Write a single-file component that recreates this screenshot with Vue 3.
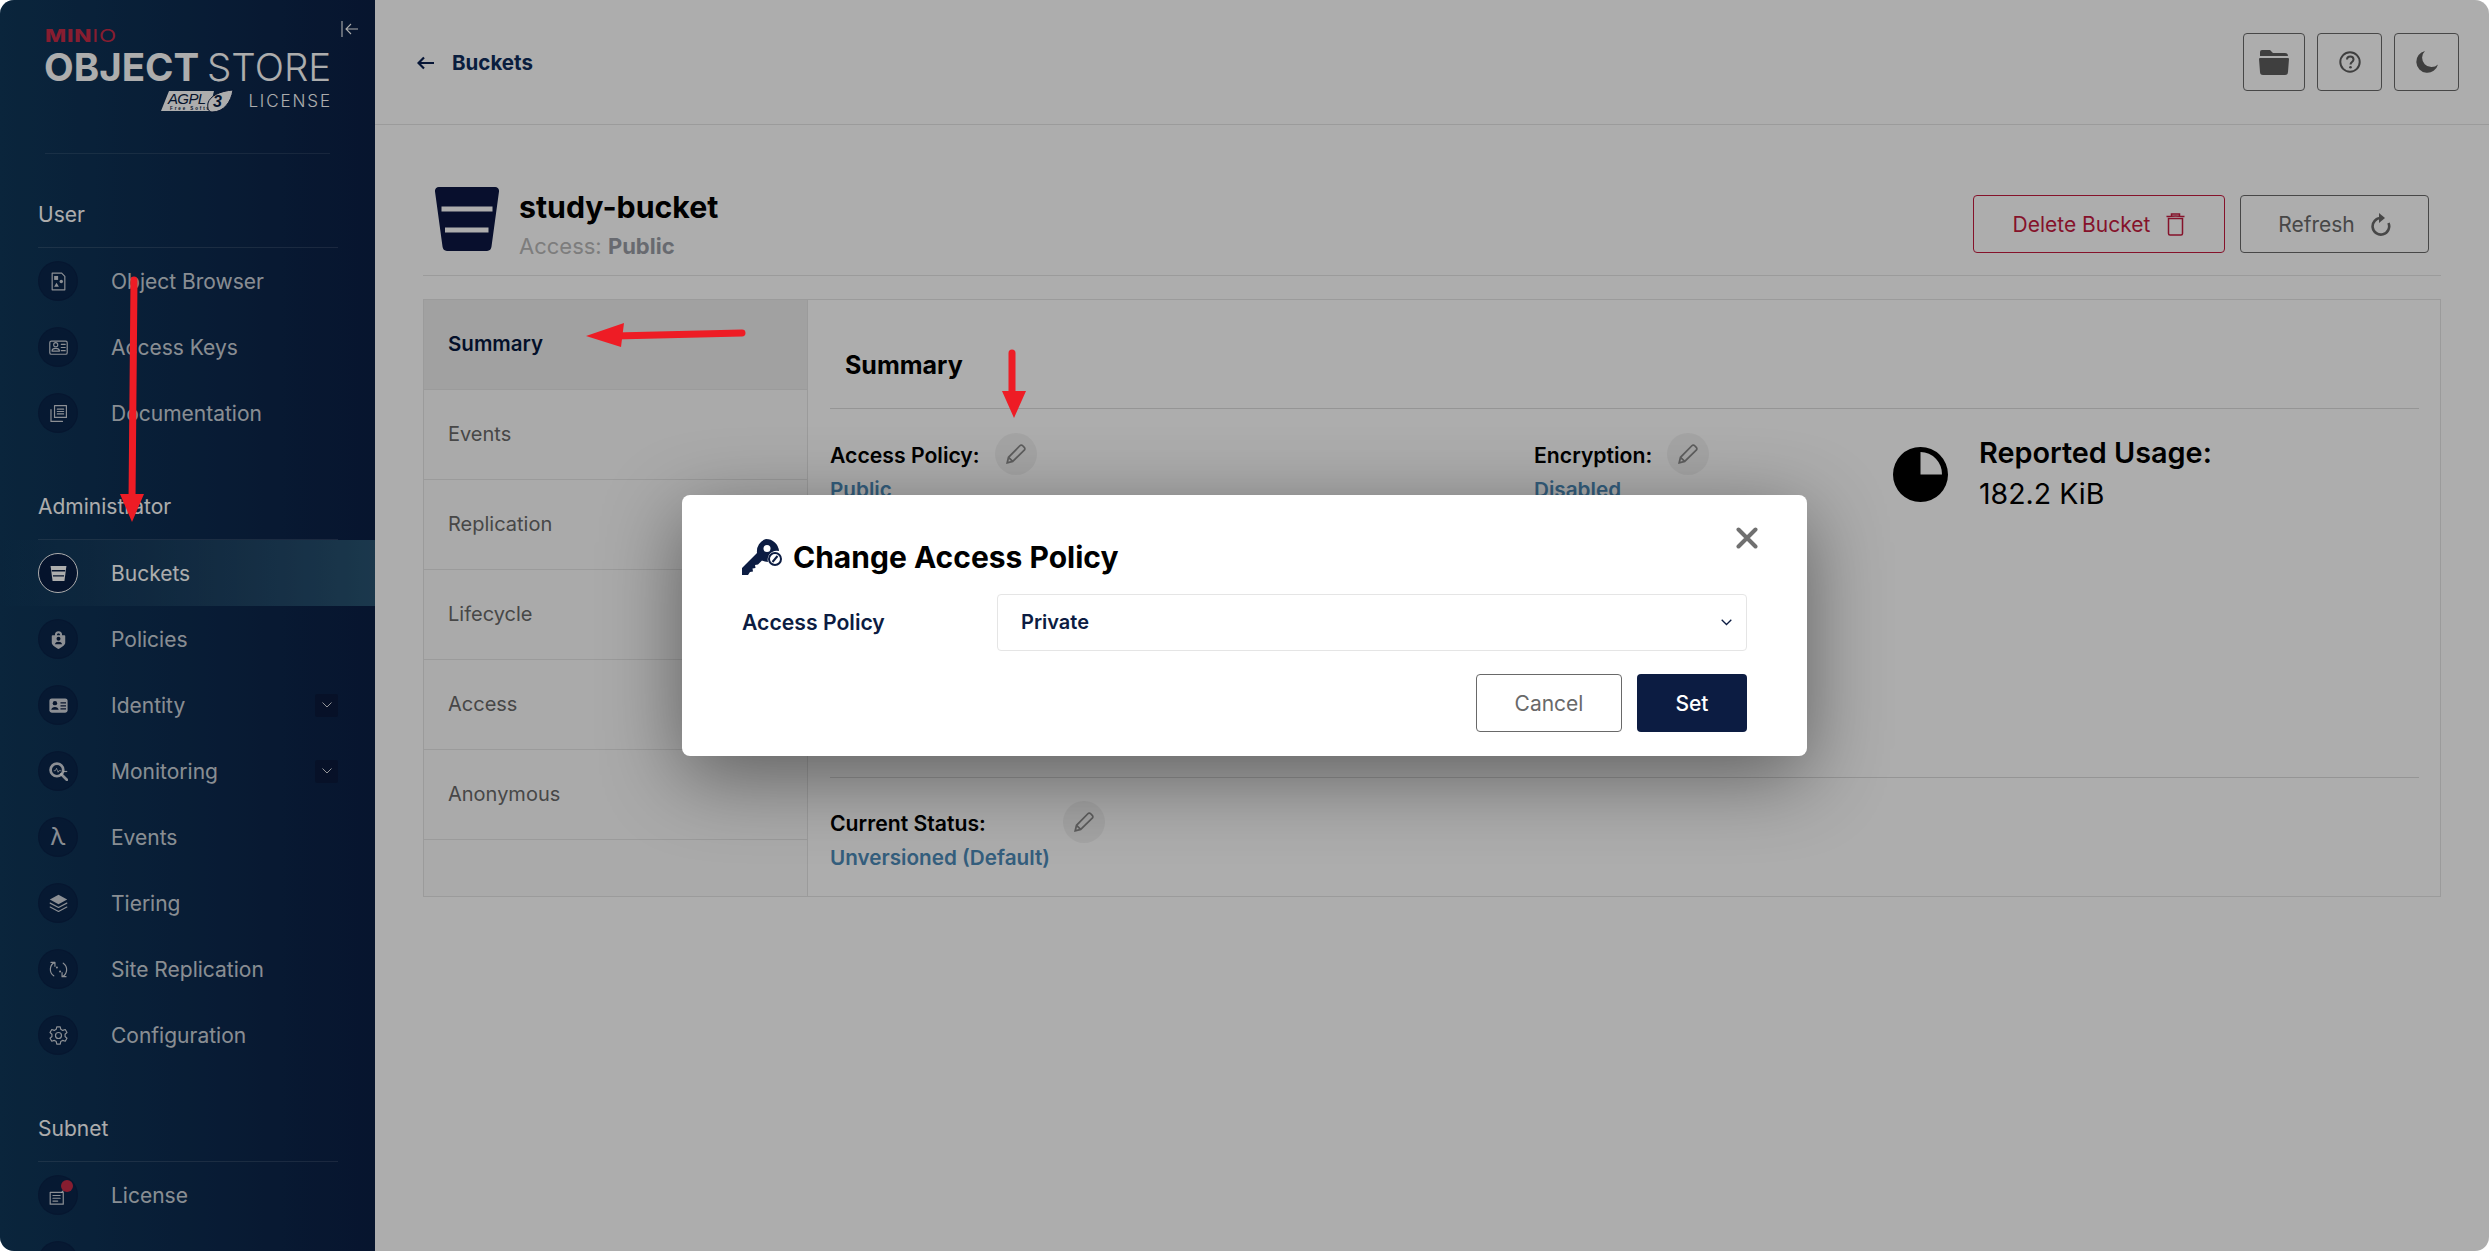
<script setup>
// sidebar menu, grouped as in the console
const stroke = 'fill="none" stroke="currentColor" stroke-width="1.500" stroke-linecap="round" stroke-linejoin="round"'
const icons = {
  browser: `<path ${stroke} d="M4 1.500h12l4 4v17H4z"/><rect x="6.500" y="5" width="5" height="5" fill="currentColor"/><circle cx="15.500" cy="12" r="2.200" fill="currentColor"/><path d="M9.500 13.500l3 5H6.500z" fill="currentColor"/>`,
  keys: `<rect x="1" y="4" width="22" height="16.500" rx="2" ${stroke}/><circle cx="8.500" cy="8.500" r="2.600" fill="none" stroke="currentColor" stroke-width="1.400"/><path ${stroke} d="M3.800 16.500c.3-4.500 9.100-4.500 9.400 0zM15.500 8h5M15.500 12h5M15.500 16h5"/>`,
  docs: `<path ${stroke} d="M7 2h15v15H7zM2.500 7v15H17"/><path ${stroke} d="M10.500 6.500h8M10.500 9.500h8M10.500 12.500h8"/>`,
  bucket: `<path d="M2 2.500h20l-2.500 19h-15z" fill="currentColor"/><path d="M3.500 8.500h17M5 15h14" stroke="#081c42" stroke-width="1.800"/>`,
  policies: `<path d="M7.500 6.500V6a4.500 4.500 0 0 1 9 0v.5h3a1 1 0 0 1 1 1V16c0 3-5 6-8.500 8-3.500-2-8.500-5-8.500-8V7.500a1 1 0 0 1 1-1zM10 6.500h4V6a2 2 0 0 0-4 0z" fill="currentColor"/><circle cx="12" cy="11" r="2.500" fill="#0b1f42"/><path d="M7.500 18c.5-4.200 8.500-4.200 9 0z" fill="#0b1f42"/>`,
  identity: `<rect x="0.500" y="3" width="23" height="18" rx="3" fill="currentColor"/><circle cx="7.500" cy="9" r="2.800" fill="#0b1f42"/><path d="M2.800 17.500c.3-5 9.100-5 9.400 0zM14.500 8h7v1.600h-7zM14.500 11.700h7v1.600h-7zM14.500 15.400h7V17h-7z" fill="#0b1f42"/>`,
  monitoring: `<circle cx="10" cy="10" r="8" fill="none" stroke="currentColor" stroke-width="3.400"/><path d="M15.500 15.500l7 7" stroke="currentColor" stroke-width="3.400" stroke-linecap="round"/><path d="M6 11h2l1.500-3 2 5 1-2h3" fill="none" stroke="currentColor" stroke-width="1"/><path d="M18 12h5" stroke="currentColor" stroke-width="1.500"/>`,
  tiering: `<path d="M12 1l11 6-11 6L1 7z" fill="currentColor"/><path ${stroke} stroke-width="1.800" d="M1.500 11.500L12 17l10.500-5.500M1.500 16.500L12 22l10.500-5.500"/>`,
  replication: `<path ${stroke} stroke-width="2" d="M6 20a10 10 0 0 1 1-17M18 4a10 10 0 0 1-1 17M7.500 8V3H2.500M16.500 16v5h5"/><circle cx="10" cy="9.500" r="1.300" fill="currentColor"/><circle cx="14" cy="14.500" r="1.300" fill="currentColor"/>`,
  config: `<path ${stroke} d="M9.800 1h4.400l.7 3.200 2.500 1.400 3.100-1.100 2.200 3.800-2.400 2.100v2.900l2.400 2.100-2.200 3.800-3.100-1.100-2.500 1.400-.7 3.500H9.800l-.7-3.500-2.500-1.400-3.100 1.100-2.200-3.800 2.400-2.100v-2.900L1.300 8.300l2.200-3.800 3.100 1.100 2.500-1.400z"/><circle cx="12" cy="12" r="3.800" ${stroke}/>`,
  license: `<path ${stroke} d="M1.500 8h16.500v15H1.500z"/><path ${stroke} d="M5 12h9M5 15.500h9M5 19h6M16 8l4-4"/>`
}

const groups = [
  {
    title: 'User',
    items: [
      { label: 'Object Browser', icon: 'browser' },
      { label: 'Access Keys', icon: 'keys' },
      { label: 'Documentation', icon: 'docs' }
    ]
  },
  {
    title: 'Administrator',
    items: [
      { label: 'Buckets', icon: 'bucket', active: true },
      { label: 'Policies', icon: 'policies' },
      { label: 'Identity', icon: 'identity', more: true },
      { label: 'Monitoring', icon: 'monitoring', more: true },
      { label: 'Events', glyph: 'λ' },
      { label: 'Tiering', icon: 'tiering' },
      { label: 'Site Replication', icon: 'replication' },
      { label: 'Configuration', icon: 'config' }
    ]
  },
  {
    title: 'Subnet',
    items: [
      { label: 'License', icon: 'license', dot: true },
      { label: '', icon: 'docs' }
    ]
  }
]

const tabs = ['Summary', 'Events', 'Replication', 'Lifecycle', 'Access', 'Anonymous']
</script>

<template>
  <div class="window">
    <aside class="sidebar">
      <div class="logo">
        <div class="logo-minio"><b>MIN</b><span>IO</span></div>
        <div class="logo-product"><b>OBJECT</b> <span>STORE</span></div>
        <div class="logo-license">
          <svg width="73" height="24" viewBox="0 0 73 24">
            <path d="M8 2h45l-5 20H0z" fill="#fff" />
            <text x="7" y="15" font-family="Liberation Sans" font-style="italic" font-size="15" fill="#081c42" textLength="40">AGPL</text>
            <text x="9" y="21" font-family="Liberation Sans" font-weight="700" font-size="4.500" fill="#081c42">Free Software</text>
            <path d="M47 14c2-7 12-12 25-13-2 12-9 22-21 22-3 0-5-3-4-9z" fill="#fff" stroke="#081c42" stroke-width="1" />
            <text x="52" y="18" font-family="Liberation Sans" font-style="italic" font-weight="700" font-size="16" fill="#081c42">3</text>
          </svg>
          <span>LICENSE</span>
        </div>
        <svg class="collapse" width="18" height="18" viewBox="0 0 18 18">
          <path d="M1 1v16M17 9H5M10 4L5 9l5 5" fill="none" stroke="#fff" stroke-width="1.100" />
        </svg>
      </div>

      <section v-for="group in groups" :key="group.title">
        <h4 class="group-title">{{ group.title }}</h4>
        <a v-for="item in group.items" :key="item.label" class="nav-item" :class="{ active: item.active }">
          <span class="nav-icon">
            <span v-if="item.glyph" class="glyph">{{ item.glyph }}</span>
            <svg v-else width="19" height="19" viewBox="0 0 24 24" v-html="icons[item.icon]"></svg>
            <i v-if="item.dot" class="dot"></i>
          </span>
          <span class="nav-label">{{ item.label }}</span>
          <span v-if="item.more" class="more">
            <svg width="10" height="6" viewBox="0 0 10 6"><path d="M.5.5L5 5 9.500.5" fill="none" stroke="#fff" stroke-opacity=".85" /></svg>
          </span>
        </a>
      </section>
    </aside>

    <main class="main">
      <header class="topbar">
        <a class="back">
          <svg width="18" height="14" viewBox="0 0 18 14"><path d="M17 7H2M7 1.500L1.500 7 7 12.500" fill="none" stroke="#0a2050" stroke-width="2.200" /></svg>
          <span>Buckets</span>
        </a>
        <div class="top-actions">
          <button class="top-btn wide">
            <svg width="30" height="25" viewBox="0 0 30 25"><path d="M3 0h8l3 3h12a3 3 0 0 1 3 3H1V2a2 2 0 0 1 2-2zM1 8h28a1 1 0 0 1 1 1l-1 13a3 3 0 0 1-3 3H4a3 3 0 0 1-3-3L0 9a1 1 0 0 1 1-1z" fill="#5e5e5e" /></svg>
          </button>
          <button class="top-btn">
            <svg width="22" height="22" viewBox="0 0 22 22">
              <circle cx="11" cy="11" r="9.700" fill="none" stroke="#5e5e5e" stroke-width="2" />
              <path d="M8 8.500c0-4 6.500-4 6.500 0 0 2.500-3 2.500-3 5" fill="none" stroke="#5e5e5e" stroke-width="2" />
              <circle cx="11.500" cy="16.300" r="1.300" fill="#5e5e5e" />
            </svg>
          </button>
          <button class="top-btn">
            <svg width="22" height="22" viewBox="0 0 22 22"><path d="M9 0a9 9 0 0 0 13 13.500A11 11 0 1 1 9 0z" fill="#5e5e5e" /></svg>
          </button>
        </div>
      </header>

      <div class="content">
        <div class="bucket-head">
          <svg class="bucket-icon" width="64" height="64" viewBox="0 0 64 64">
            <path d="M4 0h56a4 4 0 0 1 4 4.500l-7.500 55A5 5 0 0 1 52 64H12a5 5 0 0 1-4.500-4.500L0 4.500A4 4 0 0 1 4 0z" fill="#0c1743" />
            <path d="M6.500 22h51M10 43h43.500" stroke="#fff" stroke-width="5" />
          </svg>
          <div class="bucket-text">
            <h1>study-bucket</h1>
            <p>Access: <b>Public</b></p>
          </div>
          <div class="head-actions">
            <button class="btn danger">
              Delete Bucket
              <svg width="19" height="23" viewBox="0 0 19 23"><path d="M2.500 5.500h14v15a1.500 1.500 0 0 1-1.500 1.500H4a1.500 1.500 0 0 1-1.500-1.500zM.5 3.500Q9.500 2.500 18.500 3.500M5.500 3V1h8v2" fill="none" stroke="currentColor" stroke-width="1.500" /></svg>
            </button>
            <button class="btn">
              Refresh
              <svg width="20" height="23" viewBox="0 0 20 23"><path d="M10 5A8.300 8.300 0 1 0 17.500 10" fill="none" stroke="currentColor" stroke-width="2.600" /><path d="M8 0v10l6-5z" fill="currentColor" /></svg>
            </button>
          </div>
        </div>

        <div class="panel">
          <nav class="tabs">
            <a v-for="(tab, i) in tabs" :key="tab" class="tab" :class="{ active: i === 0 }">{{ tab }}</a>
          </nav>
          <div class="details">
            <h3 class="details-title">Summary</h3>
            <div class="info-grid">
              <div>
                <div class="field">
                  <span>Access Policy:</span>
                  <span class="edit"><svg width="22" height="22" viewBox="0 0 20 20"><path d="M2 18l1.200-5L13.500 2.500a1.800 1.800 0 0 1 2.600 0l1.400 1.400a1.800 1.800 0 0 1 0 2.600L7 16.800zM3.200 13L7 16.800" fill="none" stroke="#8a8a8a" stroke-width="1.600" /></svg></span>
                </div>
                <a class="value">Public</a>
              </div>
              <div>
                <div class="field">
                  <span>Encryption:</span>
                  <span class="edit"><svg width="22" height="22" viewBox="0 0 20 20"><path d="M2 18l1.200-5L13.500 2.500a1.800 1.800 0 0 1 2.600 0l1.400 1.400a1.800 1.800 0 0 1 0 2.600L7 16.800zM3.200 13L7 16.800" fill="none" stroke="#8a8a8a" stroke-width="1.600" /></svg></span>
                </div>
                <a class="value">Disabled</a>
              </div>
              <div class="usage">
                <svg width="55" height="55" viewBox="0 0 55 55">
                  <circle cx="27.500" cy="27.500" r="27.500" fill="#000" />
                  <path d="M27.500 27.500V5A22 22 0 0 1 49 27.500z" fill="#fff" />
                </svg>
                <div>
                  <div class="usage-label">Reported Usage:</div>
                  <div class="usage-value">182.2 KiB</div>
                </div>
              </div>
            </div>
            <div class="versioning">
              <div class="field">
                <span class="status-label">Current Status:</span>
                <span class="edit"><svg width="22" height="22" viewBox="0 0 20 20"><path d="M2 18l1.200-5L13.500 2.500a1.800 1.800 0 0 1 2.600 0l1.400 1.400a1.800 1.800 0 0 1 0 2.600L7 16.800zM3.200 13L7 16.800" fill="none" stroke="#8a8a8a" stroke-width="1.600" /></svg></span>
              </div>
              <a class="value">Unversioned (Default)</a>
            </div>
          </div>
        </div>
      </div>
    </main>

    <div class="overlay">
      <div class="modal">
        <button class="close">
          <svg width="22" height="22" viewBox="0 0 22 22"><path d="M2.500 2.500l17 17M19.500 2.500l-17 17" stroke="#707070" stroke-width="4" stroke-linecap="round" /></svg>
        </button>
        <h2 class="modal-title">
          <svg width="40" height="36" viewBox="0 0 40 36">
            <path d="M24 0a13 13 0 0 1 13 12 9 9 0 0 0-11 11 13 13 0 0 1-6-1.500L16 25.500l-3 .5.500 3-3 .5.500 3-3 .500L6 36H0v-7L15 14a13 13 0 0 1 9-14z" fill="#0c1c42" />
            <circle cx="25" cy="9.500" r="3.500" fill="#fff" />
            <circle cx="33" cy="20" r="6" fill="#fff" stroke="#0c1c42" stroke-width="2" />
            <path d="M30.500 23l5-6" stroke="#0c1c42" stroke-width="2" />
          </svg>
          Change Access Policy
        </h2>
        <div class="form-row">
          <label>Access Policy</label>
          <div class="select">
            <span>Private</span>
            <svg width="11" height="7" viewBox="0 0 11 7"><path d="M.7.7l4.800 4.800L10.300.7" fill="none" stroke="#0c1c42" stroke-width="1.300" /></svg>
          </div>
        </div>
        <div class="modal-actions">
          <button class="btn-cancel">Cancel</button>
          <button class="btn-set">Set</button>
        </div>
      </div>
    </div>

    <!-- hand drawn red arrows from the screenshot -->
    <svg class="marks" width="2489" height="1251" viewBox="0 0 2489 1251">
      <path d="M134 280L132 500M742 333L615 336M1012 353V395" stroke="#ee1c25" stroke-width="7" stroke-linecap="round" fill="none" />
      <path d="M120 494L144 494 132 522zM586 336L624 323 621 347zM1002 391H1026L1014 418z" fill="#ee1c25" />
    </svg>
  </div>
</template>

<style>
html,
body {
  margin: 0;
  background: #fff;
  overflow: hidden;
}
</style>

<style scoped>
.window {
  position: relative;
  display: flex;
  height: 100vh;
  overflow: hidden;
  border-radius: 14px;
  background: #fff;
  font-family: Inter, "Noto Sans", sans-serif;
}

/* sidebar */
.sidebar {
  flex: 0 0 375px;
  min-width: 0;
  height: 100%;
  background: linear-gradient(90deg, #0f3759 0%, #0b1f45 100%);
  color: #fff;
}

.logo {
  position: relative;
  box-sizing: border-box;
  height: 154px;
  margin: 0 45px;
  padding-top: 26px;
  border-bottom: 1px solid rgba(255, 255, 255, 0.1);
}

.logo-minio {
  height: 20px;
  font-size: 17px;
  line-height: 20px;
  letter-spacing: 0.6px;
  color: #c72c48;
  transform: scaleX(1.32);
  transform-origin: left center;
}

.logo-minio b {
  font-weight: 800;
}

.logo-minio span {
  font-weight: 400;
}

.logo-product {
  margin-left: -1px;
  font-size: 38.5px;
  line-height: 42px;
  white-space: nowrap;
  letter-spacing: 0;
}

.logo-product b {
  font-weight: 700;
}

.logo-product span {
  margin-left: -3px;
  font-weight: 300;
}

.logo-license {
  display: flex;
  align-items: center;
  justify-content: flex-end;
  gap: 14px;
  margin-top: 1px;
  font-size: 17px;
  font-weight: 300;
  letter-spacing: 1.9px;
}

.logo-license span {
  margin-right: -2px;
}

.collapse {
  position: absolute;
  top: 20px;
  right: -29px;
}

.group-title {
  box-sizing: border-box;
  display: flex;
  align-items: flex-end;
  height: 94px;
  margin: 0 37px 0 38px;
  padding-bottom: 20px;
  border-bottom: 1px solid rgba(255, 255, 255, 0.12);
  font-size: 21px;
  font-weight: 400;
  line-height: 25px;
}

.nav-item {
  display: flex;
  align-items: center;
  gap: 33px;
  height: 66px;
  padding: 0 37px 0 38px;
  color: rgba(255, 255, 255, 0.8);
}

.nav-item.active {
  color: #fff;
  background: linear-gradient(90deg, rgba(40, 83, 113, 0) 0%, #285371 100%);
}

.nav-icon {
  position: relative;
  box-sizing: border-box;
  display: flex;
  flex: 0 0 40px;
  align-items: center;
  justify-content: center;
  height: 40px;
  border: 1px solid rgba(8, 28, 66, 0.4);
  border-radius: 50%;
  background: rgba(8, 28, 66, 0.6);
}

.active .nav-icon {
  border: 1px solid #fff;
  background: #081c42;
}

.glyph {
  font-size: 24px;
  line-height: 1;
}

.dot {
  position: absolute;
  top: 4px;
  right: 4px;
  width: 12px;
  height: 12px;
  border-radius: 50%;
  background: #c72c48;
}

.nav-label {
  flex: 1;
  font-size: 21px;
}

.more {
  display: flex;
  align-items: center;
  justify-content: center;
  width: 23px;
  height: 23px;
  border-radius: 2px;
  background: rgba(11, 25, 58, 0.9);
}

/* main column */
.main {
  flex: 1;
  min-width: 0;
  background: #fff;
}

.topbar {
  box-sizing: border-box;
  display: flex;
  align-items: center;
  justify-content: space-between;
  height: 125px;
  padding: 1px 30px 0 42px;
  border-bottom: 1px solid #e5e5e5;
}

.back {
  display: flex;
  align-items: center;
  gap: 17px;
  font-size: 20.500px;
  font-weight: 700;
  color: #0f2d5c;
}

.top-actions {
  display: flex;
  gap: 12px;
  margin-top: -1px;
}

.top-btn {
  display: flex;
  align-items: center;
  justify-content: center;
  width: 65px;
  height: 58px;
  padding: 0;
  border: 1px solid #696969;
  border-radius: 4px;
  background: #fff;
}

.top-btn.wide {
  width: 62px;
}

.content {
  padding: 0 48px;
}

.bucket-head {
  box-sizing: border-box;
  display: flex;
  align-items: flex-start;
  height: 151px;
  padding: 62px 12px 0;
  border-bottom: 1px solid #e5e5e5;
}

.bucket-text {
  margin-left: 20px;
  flex: 1;
}

.bucket-text h1 {
  margin: 0;
  font-size: 30.300px;
  font-weight: 700;
  line-height: 40px;
  color: #000;
}

.bucket-text p {
  margin: 0;
  font-size: 22px;
  line-height: 39px;
  color: #b8b8b8;
}

.bucket-text b {
  font-weight: 700;
  color: #9a9da6;
}

.head-actions {
  display: flex;
  gap: 15px;
  margin-top: 8px;
}

.btn {
  display: flex;
  align-items: center;
  justify-content: center;
  gap: 16px;
  box-sizing: border-box;
  width: 189px;
  height: 58px;
  border: 1.500px solid #696969;
  border-radius: 4px;
  background: #fff;
  font-family: inherit;
  font-size: 21px;
  color: #696969;
}

.btn.danger {
  width: 252px;
  border-color: #c51b3f;
  color: #c51b3f;
}

.panel {
  display: flex;
  height: 598px;
  margin-top: 23px;
  box-sizing: border-box;
  border: 1px solid #e5e5e5;
}

.tabs {
  flex: 0 0 384px;
  box-sizing: border-box;
  border-right: 1px solid #e5e5e5;
  background: #fbfbfb;
}

.tab {
  box-sizing: border-box;
  display: flex;
  align-items: center;
  height: 90px;
  padding: 0 24px 2px;
  border-bottom: 1px solid #e5e5e5;
  font-size: 20px;
  color: #696969;
}

.tab.active {
  background: #eeeeee;
  font-size: 20.500px;
  font-weight: 600;
  color: #07193e;
}

.details {
  flex: 1;
  min-width: 0;
  padding: 0 21px 0 22px;
}

.details-title {
  box-sizing: border-box;
  height: 109px;
  margin: 0;
  padding: 50px 0 0 15px;
  border-bottom: 1px solid #dcdcdc;
  font-size: 25px;
  font-weight: 700;
  line-height: 31px;
  color: #000;
}

.info-grid {
  box-sizing: border-box;
  display: grid;
  grid-template-columns: 704px 359px 1fr;
  align-content: start;
  height: 369px;
  padding-top: 24px;
  border-bottom: 1px solid #dcdcdc;
}

.field {
  display: flex;
  align-items: center;
  gap: 15px;
  height: 42px;
  font-size: 21.200px;
  font-weight: 600;
  color: #000;
}

.field > span:first-child {
  padding-top: 1px;
}

.edit {
  display: flex;
  align-items: center;
  justify-content: center;
  width: 42px;
  height: 42px;
  margin-top: -1px;
  border-radius: 50%;
  background: #f2f2f2;
}

.value {
  display: block;
  font-size: 20.700px;
  font-weight: 600;
  line-height: 30px;
  color: #4d8bb8;
}

.usage {
  display: flex;
  align-items: flex-start;
  gap: 31px;
  padding-top: 14px;
}

.usage-label {
  margin-top: -14px;
  font-size: 28.800px;
  font-weight: 600;
  line-height: 40px;
  color: #000;
}

.usage-value {
  font-size: 28.500px;
  line-height: 42px;
  color: #000;
}

.versioning {
  padding-top: 23px;
}

.status-label {
  width: 218px;
}

/* modal on top of everything */
.overlay {
  position: absolute;
  inset: 0;
  display: flex;
  align-items: center;
  justify-content: center;
  background: rgba(0, 0, 0, 0.32);
}

.modal {
  position: relative;
  box-sizing: border-box;
  width: 1125px;
  height: 261px;
  padding: 44px 60px 0;
  border-radius: 8px;
  background: #fff;
  box-shadow: 0 20px 80px rgba(0, 0, 0, 0.45);
}

.close {
  position: absolute;
  top: 32px;
  right: 49px;
  padding: 0;
  border: 0;
  background: none;
}

.modal-title {
  display: flex;
  align-items: center;
  gap: 11px;
  height: 36px;
  margin: 0;
  font-size: 30px;
  font-weight: 700;
  color: #000;
}

.form-row {
  display: flex;
  align-items: center;
  margin-top: 19px;
}

.form-row label {
  flex: 0 0 255px;
  padding-bottom: 1px;
  font-size: 21.200px;
  font-weight: 600;
  color: #0c1c42;
}

.select {
  box-sizing: border-box;
  display: flex;
  flex: 1;
  align-items: center;
  justify-content: space-between;
  height: 57px;
  padding: 0 14px 1px 23px;
  border: 1px solid #e5e5e5;
  border-radius: 4px;
  font-size: 20px;
  font-weight: 600;
  color: #0c1c42;
}

.modal-actions {
  display: flex;
  justify-content: flex-end;
  gap: 15px;
  margin-top: 23px;
}

.btn-cancel,
.btn-set {
  height: 58px;
  border-radius: 4px;
  font-family: inherit;
  font-size: 21px;
}

.btn-cancel {
  width: 146px;
  border: 1.500px solid #696969;
  background: #fff;
  color: #696969;
}

.btn-set {
  width: 110px;
  border: 0;
  background: #0c1c42;
  font-weight: 500;
  color: #fff;
}

.marks {
  position: absolute;
  top: 0;
  left: 0;
  pointer-events: none;
}
</style>
